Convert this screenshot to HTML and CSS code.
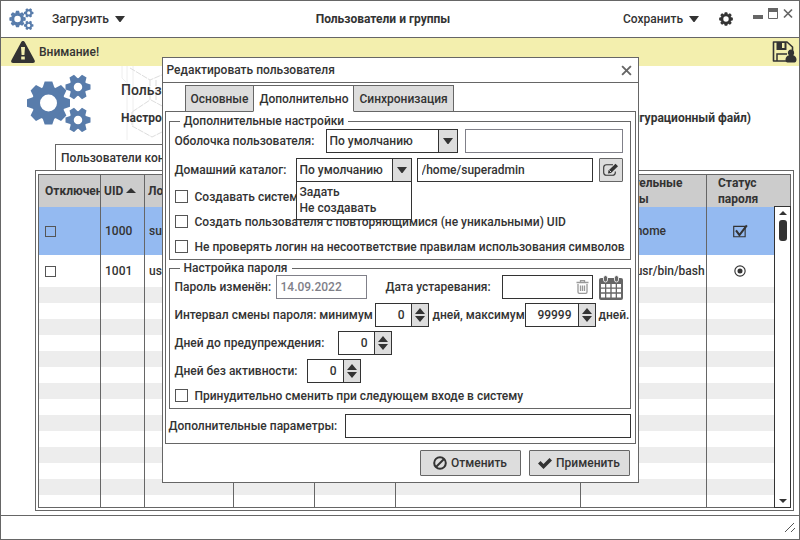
FILE: index.html
```html
<!DOCTYPE html>
<html lang="ru">
<head>
<meta charset="utf-8">
<title>Пользователи и группы</title>
<link rel="stylesheet" href="styles.css">
</head>
<body>
<svg class="defs" aria-hidden="true">
  <defs>
    <polygon id="tooth8" points="-6,-15 -3.800,-21.500 3.800,-21.500 6,-15"/>
    <polygon id="tooth6" points="-4.200,-7 -2.600,-12.500 2.600,-12.500 4.200,-7"/>
    <g id="gear8">
      <circle r="12.500" fill="none" stroke="currentColor" stroke-width="8"/>
      <g fill="currentColor">
        <use href="#tooth8"/><use href="#tooth8" transform="rotate(45)"/><use href="#tooth8" transform="rotate(90)"/><use href="#tooth8" transform="rotate(135)"/>
        <use href="#tooth8" transform="rotate(180)"/><use href="#tooth8" transform="rotate(225)"/><use href="#tooth8" transform="rotate(270)"/><use href="#tooth8" transform="rotate(315)"/>
      </g>
    </g>
    <g id="gear6">
      <circle r="6.500" fill="none" stroke="currentColor" stroke-width="4.500"/>
      <g fill="currentColor">
        <use href="#tooth6" transform="rotate(30)"/><use href="#tooth6" transform="rotate(90)"/><use href="#tooth6" transform="rotate(150)"/>
        <use href="#tooth6" transform="rotate(210)"/><use href="#tooth6" transform="rotate(270)"/><use href="#tooth6" transform="rotate(330)"/>
      </g>
    </g>
    <symbol id="gears" viewBox="0 0 64 58">
      <use href="#gear8" x="21.500" y="29"/><use href="#gear6" x="51" y="13"/><use href="#gear6" x="51" y="46"/>
    </symbol>
    <symbol id="down" viewBox="0 0 10 6"><path d="M0 0h10L5.500 6h-1z" fill="#333"/></symbol>
    <symbol id="spin" viewBox="0 0 10 14"><path d="M5 0l5 6H0zM0 8h10l-5 6z" fill="#333"/></symbol>
    <symbol id="close" viewBox="0 0 10 10"><path d="M1 1l8 8M9 1L1 9" stroke="#666" stroke-width="1.700" fill="none"/></symbol>
  </defs>
</svg>

<div class="window">
  <header class="topbar">
    <svg class="logo"><use href="#gears"/></svg>
    <button class="menu">Загрузить <svg class="caret"><use href="#down"/></svg></button>
    <h1 class="topbar-title">Пользователи и группы</h1>
    <button class="menu">Сохранить <svg class="caret"><use href="#down"/></svg></button>
    <button class="icon-btn settings" aria-label="Настройки"><svg viewBox="-22 -22 44 44"><use href="#gear8"/></svg></button>
    <div class="win-controls">
      <button class="icon-btn" aria-label="Свернуть"><svg viewBox="0 0 10 11"><path d="M0 7h10v4H0z" fill="#666"/></svg></button>
      <button class="icon-btn" aria-label="Развернуть"><svg viewBox="0 0 10 11"><path d="M.5.5h9v10h-9z" fill="#fff" stroke="#666"/><path d="M0 0h10v4H0z" fill="#666"/></svg></button>
      <button class="icon-btn" aria-label="Закрыть"><svg><use href="#close"/></svg></button>
    </div>
  </header>

  <div class="notice" role="status">
    <svg class="warn" viewBox="0 0 24 22"><path d="M12 0c1 0 1.500.5 2 1.500l9.500 17.500c.8 1.500.3 3-1.500 3H2c-1.800 0-2.300-1.500-1.500-3L10 1.500C10.500.5 11 0 12 0z" fill="#333"/><path d="M10 6h4l-.6 8h-2.800zM10.200 15.500h3.600v3h-3.600z" fill="#f3efae"/></svg>
    <span>Внимание!</span>
    <button class="icon-btn save" aria-label="Сохранить"><svg viewBox="0 0 24 22"><path d="M1 1h13.500l5.500 5v14H1z" fill="none" stroke="#333" stroke-width="1.600" stroke-linejoin="round"/><path d="M4 1h10v8H4z" fill="#333"/><path d="M9.500 2h2.500v5H9.500z" fill="#f3efae"/><path d="M4.500 20v-7h10" fill="none" stroke="#333" stroke-width="1.500"/><path d="M18.500 8.500a3.200 3.200 0 0 1 2 5.700c2 .5 3.500 1.800 3.500 4.300 0 2-.8 3-2 3h-7c-1.200 0-2-1-2-3 0-2.500 1.500-3.800 3.500-4.300a3.200 3.200 0 0 1 2-5.700z" fill="#333"/></svg></button>
  </div>

  <main class="page">
    <div class="banner">
      <svg class="banner-logo"><use href="#gears"/></svg>
      <svg class="pattern" viewBox="0 0 44 78"><g fill="none" stroke="#ddd"><path d="M2 0v12l4 4M7 0v74M13 0v60" stroke="#eee"/><path d="M10 2l20 12 14-6M30 14v20L12 46M31 34l13 7M12 46v14l20 11 12-6M36 14v20" stroke-dasharray="6 1"/></g></svg>
      <div class="banner-text">
        <h2>Пользователи и группы</h2>
        <p><span>Настройка пользователей</span><span>(конфигурационный файл)</span></p>
      </div>
    </div>
    <div class="page-tabs"><button class="page-tab">Пользователи конфигурации</button></div>
    <div class="page-pane">
      <div class="grid-box">
        <table class="users">
          <colgroup><col class="c1"><col class="c2"><col class="c3"><col class="c4"><col class="c5"><col class="c6"><col class="c7"><col class="c8"></colgroup>
          <thead>
            <tr><th>Отключен</th><th>UID <svg class="sort" viewBox="0 0 10 5"><path d="M5 0l5 5H0z" fill="#333"/></svg></th><th>Логин</th><th></th><th></th><th></th><th>Дополнительные параметры</th><th class="status">Статус пароля</th></tr>
          </thead>
          <tbody>
            <tr class="selected"><td><input type="checkbox" class="check small" aria-label="Отключен"></td><td>1000</td><td>superadmin</td><td></td><td></td><td></td><td class="path">/home</td><td class="state"><svg class="ticked" viewBox="0 0 14 14"><path d="M1.500 3h10v9h-10z" fill="none" stroke="#333"/><path d="M3.500 6.500l3 4L13 2" fill="none" stroke="#333" stroke-width="1.800"/></svg></td></tr>
            <tr class="plain"><td><input type="checkbox" class="check small" aria-label="Отключен"></td><td>1001</td><td>user</td><td></td><td></td><td></td><td class="path">/usr/bin/bash</td><td class="state"><svg class="ticked" viewBox="0 0 14 14"><circle cx="7" cy="7" r="4.500" fill="none" stroke="#333"/><circle cx="7" cy="7" r="2.200" fill="#333"/></svg></td></tr>
            <tr class="filler"><td></td><td></td><td></td><td></td><td></td><td></td><td></td><td></td></tr>
          </tbody>
        </table>
        <div class="scrollbar">
          <svg viewBox="0 0 8 4"><path d="M4 0l4 4H0z" fill="#333"/></svg>
          <div class="thumb"></div>
          <svg viewBox="0 0 8 4"><path d="M0 0h8L4 4z" fill="#333"/></svg>
        </div>
      </div>
    </div>
  </main>
  <footer class="statusbar"><svg viewBox="0 0 10 9"><path d="M0 9L9 0M6 9l4-4" stroke="#555" fill="none"/></svg></footer>

  <section class="dialog" role="dialog" aria-label="Редактировать пользователя">
    <div class="dialog-head"><h2>Редактировать пользователя</h2><button class="icon-btn" aria-label="Закрыть"><svg><use href="#close"/></svg></button></div>
    <div class="tabs"><button>Основные</button><button class="active">Дополнительно</button><button>Синхронизация</button></div>
    <div class="pane">
      <fieldset>
        <legend>Дополнительные настройки</legend>
        <div class="row">
          <label class="l-shell" for="shell">Оболочка пользователя:</label>
          <div class="select w-shell"><select id="shell"><option>По умолчанию</option></select><span><svg class="caret"><use href="#down"/></svg></span></div>
          <input type="text" class="grow off" aria-label="Оболочка" disabled>
        </div>
        <div class="row">
          <label class="l-home" for="home">Домашний каталог:</label>
          <div class="select w-home"><select id="home"><option>По умолчанию</option></select><span><svg class="caret"><use href="#down"/></svg></span>
            <ul class="options"><li>Задать</li><li>Не создавать</li></ul></div>
          <input type="text" class="grow near" aria-label="Каталог" value="/home/superadmin">
          <button class="edit" aria-label="Изменить"><svg viewBox="0 0 18 14"><path d="M11 1.700H4.500Q1.700 1.700 1.700 4.500v5Q1.700 12.300 4.500 12.300h6Q13.300 12.300 13.300 9.500V8.500" fill="none" stroke="#333" stroke-width="1.100"/><path d="M6 10.500l.5-3L13.500.8l2.500 2.500L9 10z" fill="#333"/><path d="M7.500 7.500l1.500 1.500" stroke="#ddd"/></svg></button>
        </div>
        <label class="opt"><input type="checkbox" class="check">Создавать системного</label>
        <label class="opt"><input type="checkbox" class="check">Создать пользователя с повторяющимися (не уникальными) UID</label>
        <label class="opt"><input type="checkbox" class="check">Не проверять логин на несоответствие правилам использования символов</label>
      </fieldset>
      <fieldset class="password">
        <legend>Настройка пароля</legend>
        <div class="row">
          <label class="l-changed" for="changed">Пароль изменён:</label>
          <input type="text" id="changed" class="date off" value="14.09.2022" disabled>
          <label class="l-expire" for="expire">Дата устаревания:</label>
          <div class="date-box"><input type="text" id="expire" class="date"><svg viewBox="0 0 12 14"><path d="M0 2.500h12M4 2V.7h4V2M1.500 4v8q0 1.300 1.300 1.300h6.400q1.300 0 1.300-1.300V4M4 5.500v5.500M6 5.500v5.500M8 5.500v5.500" fill="none" stroke="#999" stroke-width="1.300"/></svg></div>
          <button class="icon-btn calendar" aria-label="Календарь"><svg viewBox="0 0 24 25"><path d="M2 3h20q2 0 2 2v18q0 2-2 2H2q-2 0-2-2V5q0-2 2-2z" fill="#666"/><path d="M2 9h4v3.500H2zM7.300 9h4v3.500h-4zM12.700 9h4v3.500h-4zM18 9h4v3.500h-4zM2 13.800h4v3.500H2zM7.300 13.800h4v3.500h-4zM12.700 13.800h4v3.500h-4zM18 13.800h4v3.500h-4zM2 18.800h4v3.700H2zM7.300 18.800h4v3.700h-4zM12.700 18.800h4v3.700h-4zM18 18.800h4v3.700h-4z" fill="#fff"/><rect x="4.500" y=".5" width="4" height="6.500" rx="2" fill="#666" stroke="#fff" stroke-width=".8"/><rect x="15.500" y=".5" width="4" height="6.500" rx="2" fill="#666" stroke="#fff" stroke-width=".8"/></svg></button>
        </div>
        <div class="row">
          <label class="l-min" for="min">Интервал смены пароля: минимум</label>
          <div class="spinner"><input type="number" id="min" value="0"><span><svg><use href="#spin"/></svg></span></div>
          <label class="l-max" for="max">дней, максимум</label>
          <div class="spinner wide"><input type="number" id="max" value="99999"><span><svg><use href="#spin"/></svg></span></div>
          <span class="unit">дней.</span>
        </div>
        <div class="row">
          <label class="l-warn" for="warn">Дней до предупреждения:</label>
          <div class="spinner"><input type="number" id="warn" value="0"><span><svg><use href="#spin"/></svg></span></div>
        </div>
        <div class="row">
          <label class="l-idle" for="idle">Дней без активности:</label>
          <div class="spinner"><input type="number" id="idle" value="0"><span><svg><use href="#spin"/></svg></span></div>
        </div>
        <label class="opt"><input type="checkbox" class="check">Принудительно сменить при следующем входе в систему</label>
      </fieldset>
      <div class="row extra"><label class="l-extra" for="extra">Дополнительные параметры:</label><input type="text" id="extra" class="grow near"></div>
    </div>
    <div class="actions">
      <button><svg viewBox="0 0 14 14"><circle cx="7" cy="7" r="5.800" fill="none" stroke="#333" stroke-width="2"/><path d="M3 11l8-8" stroke="#333" stroke-width="2"/></svg>Отменить</button>
      <button><svg viewBox="0 0 14 14"><path d="M0 7.500l2.500-2.500 3 3L11.500 2 14 4.500 5.500 13z" fill="#333"/></svg>Применить</button>
    </div>
  </section>
</div>
</body>
</html>
```
FILE: styles.css
```css
* { box-sizing: border-box; }
body {
  margin: 0;
  color: #333;
  background: #fff;
  font: 500 12px/16px Roboto, "Noto Sans", sans-serif;
}
h1, h2, p, ul { margin: 0; padding: 0; font-size: inherit; }
button, input, select { font: inherit; color: inherit; margin: 0; }
button { padding: 0; background: none; border: 0; white-space: nowrap; }
svg { display: block; flex: none; }
.defs { position: absolute; width: 0; height: 0; }

.window {
  position: relative;
  display: flex;
  flex-direction: column;
  min-height: 100vh;
  border: 1px solid #666;
}
.topbar {
  display: flex;
  align-items: center;
  height: 37px;
  padding: 0 6px 0 8px;
  border-bottom: 1px solid #666;
}
.logo { width: 25px; height: 22px; color: #587cab; }
.menu { display: flex; align-items: center; gap: 6px; margin-left: 18px; }
.caret { width: 10px; height: 6px; }
.topbar-title { flex: 1; padding-left: 36px; text-align: center; font-weight: 700; }
.icon-btn svg { width: 10px; height: 11px; }
.settings { margin-left: 20px; }
.settings svg { width: 14px; height: 14px; color: #333; }
.win-controls { display: flex; gap: 5px; margin: 0 0 12px 20px; }

.notice {
  display: flex;
  align-items: center;
  gap: 4px;
  height: 28px;
  padding: 0 2px 0 10px;
  background: #f3efae;
}
.warn { width: 24px; height: 22px; }
.save { margin-left: auto; }
.save svg { width: 25px; height: 22px; }

.page { flex: 1; display: flex; flex-direction: column; padding: 0 5px 4px 34px; }
.banner { position: relative; display: flex; height: 78px; padding: 8px 43px 0 0; margin-left: -8px; }
.banner-logo { width: 64px; height: 58px; color: #587cab; }
.pattern { position: absolute; top: 0; left: 93px; width: 44px; height: 78px; }
.banner-text { position: relative; flex: 1; margin-left: 30px; padding-top: 8px; font-weight: 700; }
.banner-text h2 { font-size: 14px; font-weight: 500; }
.banner-text p { display: flex; justify-content: space-between; margin-top: 12px; }
.page-tabs { display: flex; padding-left: 20px; }
.page-tab {
  height: 27px;
  padding: 0 5px;
  margin-bottom: -1px;
  background: #fff;
  border: 1px solid #666;
  border-bottom: 0;
}
.page-pane { flex: 1; display: flex; padding: 3px 2px 2px; border: 1px solid #666; }
.grid-box { position: relative; flex: 1; display: flex; border: 1px solid #666; }
.users { width: 100%; table-layout: fixed; border-collapse: separate; border-spacing: 0; }
.c1 { width: 62px; }
.c2 { width: 44px; }
.c3 { width: 89px; }
.c4, .c5 { width: 81px; }
.c6 { width: 185px; }
.c7 { width: 126px; }
.users th, .users td {
  padding: 0 0 0 4px;
  border-right: 1px solid #666;
  text-align: left;
  overflow: hidden;
  white-space: nowrap;
}
.users th:last-child, .users td:last-child { border-right: 0; }
.users th { height: 32px; padding-left: 3px; background: #ccc; font-weight: 700; white-space: normal; }
.users th:first-child, .users td:first-child { padding-left: 6px; }
.users .status { padding: 0 24px 0 11px; }
.users .path { padding-left: 50px; }
.sort { display: inline-block; width: 10px; height: 5px; vertical-align: 2px; }
.selected { height: 48px; background: #94baf1; }
.plain { height: 32px; }
.filler { height: 220px; background: repeating-linear-gradient(#ededed 0 16px, #fff 16px 32px); }
.ticked { width: 16px; height: 16px; margin-left: 21px; }
.scrollbar {
  position: absolute;
  top: 31px;
  right: -1px;
  bottom: -1px;
  width: 17px;
  display: flex;
  flex-direction: column;
  align-items: center;
  padding: 4px 0;
  background: #fff;
  border: 1px solid #333;
}
.scrollbar svg { width: 8px; height: 4px; }
.thumb { width: 8px; height: 21px; margin: 5px 0 auto; background: #333; border-radius: 3px; }
.statusbar {
  display: flex;
  align-items: center;
  justify-content: flex-end;
  height: 24px;
  padding: 0 4px 0 0;
  border-top: 1px solid #666;
}
.statusbar svg { width: 10px; height: 9px; }

.dialog {
  position: absolute;
  top: 56px;
  left: 0;
  right: 0;
  width: 477px;
  margin: 0 auto;
  padding-bottom: 6px;
  background: #fff;
  border: 1px solid #666;
}
.dialog-head {
  display: flex;
  align-items: center;
  justify-content: space-between;
  height: 25px;
  padding: 0 6px 0 4px;
  border-bottom: 1px solid #666;
}
.dialog-head h2 { font-size: 12px; font-weight: 500; }
.dialog-head svg { width: 11px; }
.tabs { display: flex; padding: 2px 0 0 22px; }
.tabs button {
  height: 27px;
  padding: 0 5px;
  margin-bottom: -1px;
  background: #ddd;
  border: 1px solid #666;
}
.tabs button + button { margin-left: -1px; }
.tabs .active { position: relative; background: #fff; border-bottom-color: #fff; }
.pane { margin: 0 2px; padding: 2px 4px 5px 3px; border: 1px solid #666; }
fieldset { min-width: 0; margin: 0; padding: 1px 7px 0 5px; border: 1px solid #666; }
legend { height: 14px; margin-left: 5px; padding: 0 4px; line-height: 14px; }
fieldset.password { margin-top: 1px; padding-top: 0; }
.row { display: flex; align-items: center; height: 24px; margin-bottom: 5px; white-space: nowrap; }
.row > label { flex: none; }
.row + .opt { margin-top: -3px; }
.password .row { margin-bottom: 4px; }
.password .row + .opt { margin-top: -4px; }
.opt { display: flex; align-items: center; gap: 7px; height: 25px; white-space: nowrap; }
.check {
  appearance: none;
  flex: none;
  width: 13px;
  height: 13px;
  background: #fff;
  border: 1px solid #555;
}
.check.small { display: block; width: 11px; height: 11px; background: none; }
input[type="text"], input[type="number"], select {
  height: 24px;
  min-width: 0;
  padding: 0 4px;
  background: #fff;
  border: 1px solid #333;
  border-radius: 0;
}
input.off[type="text"] { color: #808089; border-color: #808089; }
.grow { flex: 1; margin-left: 7px; }
.grow.near { margin-left: 5px; }
.select, .spinner { position: relative; flex: none; display: flex; }
.select select { appearance: none; width: 100%; padding: 0 3px; }
.select > span, .spinner > span {
  position: absolute;
  top: 0;
  right: 0;
  width: 18px;
  height: 24px;
  display: grid;
  place-items: center;
  background: #ddd;
  border: 1px solid #333;
  pointer-events: none;
}
.select > span { width: 20px; }
.w-shell { width: 132px; }
.w-home { width: 116px; }
.options {
  position: absolute;
  z-index: 2;
  top: 23px;
  left: 0;
  right: 0;
  padding: 2px 3px 3px;
  background: #fff;
  border: 1px solid #333;
  list-style: none;
}
.edit {
  width: 24px;
  height: 24px;
  margin-left: 6px;
  display: grid;
  place-items: center;
  background: #ddd;
  border: 1px solid #666;
  border-radius: 1px;
}
.edit svg { width: 18px; height: 14px; }
.spinner { width: 54px; }
.spinner.wide { width: 71px; }
.spinner input[type="number"] { width: 100%; padding: 0 23px 0 2px; text-align: right; appearance: textfield; }
.spinner input::-webkit-inner-spin-button { display: none; }
.spinner svg { width: 10px; height: 14px; }
.date { width: 91px; }
.date-box { position: relative; display: flex; }
.date-box svg { position: absolute; top: 5px; right: 4px; width: 13px; height: 14px; }
.calendar { margin-left: 6px; }
.calendar svg { width: 24px; height: 25px; }
.l-shell { width: 151px; }
.l-home { width: 121px; }
.l-changed { width: 101px; }
.l-expire { width: 116px; margin-left: 19px; }
.l-min { width: 200px; }
.l-max { width: 92px; margin-left: 4px; }
.l-warn { width: 163px; }
.l-idle { width: 132px; }
.l-extra { width: 171px; }
.unit { margin-left: 3px; }
.row.extra { margin: 5px 0 0; }
.actions { display: flex; justify-content: flex-end; gap: 8px; padding: 6px 8px 0 0; }
.actions button {
  width: 101px;
  height: 26px;
  display: flex;
  align-items: center;
  justify-content: center;
  gap: 4px;
  background: #ddd;
  border: 1px solid #666;
  border-radius: 1px;
}
.actions svg { width: 14px; height: 14px; }
```
